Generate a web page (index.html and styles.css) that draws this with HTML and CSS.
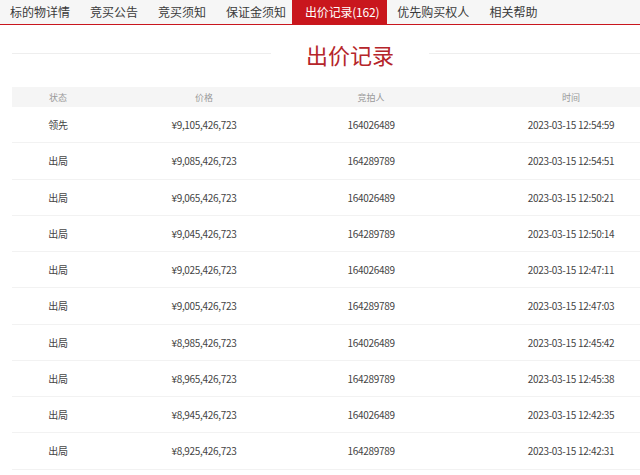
FILE: index.html
```html
<!DOCTYPE html>
<html lang="zh">
<head>
<meta charset="utf-8">
<link rel="stylesheet" href="styles.css">
</head>
<body>
<nav class="tabs">
  <span class="tab">标的物详情</span>
  <span class="tab">竞买公告</span>
  <span class="tab">竞买须知</span>
  <span class="tab">保证金须知</span>
  <span class="tab active">出价记录(162)</span>
  <span class="tab">优先购买权人</span>
  <span class="tab">相关帮助</span>
</nav>
<div class="title-row">
  <span class="line"></span>
  <h1 class="title">出价记录</h1>
  <span class="line"></span>
</div>
<div class="table">
  <div class="row head"><span>状态</span><span>价格</span><span>竞拍人</span><span>时间</span></div>
  <div class="row"><span>领先</span><span>¥9,105,426,723</span><span>164026489</span><span>2023-03-15 12:54:59</span></div>
  <div class="row"><span>出局</span><span>¥9,085,426,723</span><span>164289789</span><span>2023-03-15 12:54:51</span></div>
  <div class="row"><span>出局</span><span>¥9,065,426,723</span><span>164026489</span><span>2023-03-15 12:50:21</span></div>
  <div class="row"><span>出局</span><span>¥9,045,426,723</span><span>164289789</span><span>2023-03-15 12:50:14</span></div>
  <div class="row"><span>出局</span><span>¥9,025,426,723</span><span>164026489</span><span>2023-03-15 12:47:11</span></div>
  <div class="row"><span>出局</span><span>¥9,005,426,723</span><span>164289789</span><span>2023-03-15 12:47:03</span></div>
  <div class="row"><span>出局</span><span>¥8,985,426,723</span><span>164026489</span><span>2023-03-15 12:45:42</span></div>
  <div class="row"><span>出局</span><span>¥8,965,426,723</span><span>164289789</span><span>2023-03-15 12:45:38</span></div>
  <div class="row"><span>出局</span><span>¥8,945,426,723</span><span>164026489</span><span>2023-03-15 12:42:35</span></div>
  <div class="row"><span>出局</span><span>¥8,925,426,723</span><span>164289789</span><span>2023-03-15 12:42:31</span></div>
</div>
</body>
</html>
```
FILE: styles.css
```css
html, body {
  margin: 0;
  padding: 0;
  background: #fff;
  overflow: hidden;
}
body {
  width: 640px;
  font-family: "Noto Sans CJK SC", "Open Sans", sans-serif;
  color: #333;
}
.tabs {
  display: flex;
  height: 24px;
  background: #f6f6f6;
  border-bottom: 1px solid #c9161d;
  white-space: nowrap;
}
.tab {
  padding: 0 10px;
  font-size: 12px;
  line-height: 24px;
  color: #3a3a3a;
}
.tab.active {
  background: #c9161d;
  color: #fff;
  padding: 0 8px 0 13px;
  margin-left: -4px;
  letter-spacing: -0.2px;
}
.title-row {
  display: flex;
  align-items: center;
  height: 62px;
  padding: 0 0 5px 12px;
  box-sizing: border-box;
  width: 688px;
}
.line {
  flex: 1;
  height: 1px;
  background: #eeeeee;
}
.title {
  margin: 0 35px;
  font-size: 22px;
  font-weight: normal;
  color: #b5252a;
  line-height: 30px;
}
.table {
  margin-left: 12px;
  width: 692px;
}
.row {
  display: grid;
  grid-template-columns: 92px 200px 134px 266px;
  height: 36.25px;
  align-items: center;
  border-bottom: 1px solid #f2f2f2;
  font-size: 10px;
  letter-spacing: -0.3px;
  color: #444;
  text-align: center;
  box-sizing: border-box;
}
.row.head {
  height: 20px;
  background: #f5f5f5;
  border-bottom: none;
  color: #999;
  font-size: 9px;
  letter-spacing: 0;
}
```
